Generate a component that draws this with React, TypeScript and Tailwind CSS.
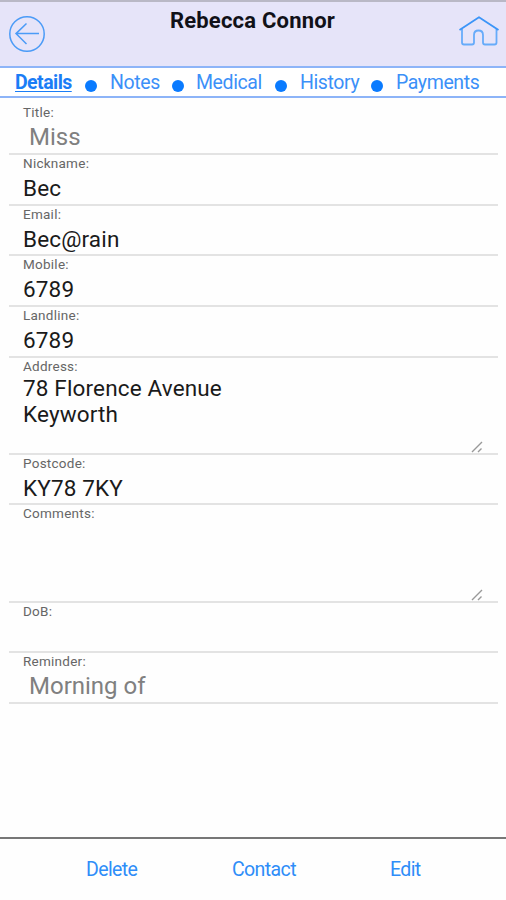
import { Fragment } from "react"
import { clsx } from "clsx"

interface Field {
  label: string
  value: string
  kind?: "select" | "textarea"
  height: string
}

const FIELDS: Field[] = [
  { label: "Title", value: "Miss", kind: "select", height: "h-[51px]" },
  { label: "Nickname", value: "Bec", height: "h-[51px]" },
  { label: "Email", value: "Bec@rain", height: "h-[50px]" },
  { label: "Mobile", value: "6789", height: "h-[51px]" },
  { label: "Landline", value: "6789", height: "h-[51px]" },
  { label: "Address", value: "78 Florence Avenue\nKeyworth", kind: "textarea", height: "h-[97px]" },
  { label: "Postcode", value: "KY78 7KY", height: "h-[50px]" },
  { label: "Comments", value: "", kind: "textarea", height: "h-[98px]" },
  { label: "DoB", value: "", height: "h-[50px]" },
  { label: "Reminder", value: "Morning of", kind: "select", height: "h-[51px]" },
]

const TABS = [
  { name: "Details", width: "w-[56px]", gap: "ml-[14px] mr-[13px]" },
  { name: "Notes", width: "w-[49px]", gap: "ml-[13px] mr-[12px]" },
  { name: "Medical", width: "w-[65px]", gap: "ml-[14px] mr-[13px]" },
  { name: "History", width: "w-[59px]", gap: "ml-[12px] mr-[13px]" },
  { name: "Payments", width: "w-[83px]", gap: "" },
]

function BackIcon() {
  return (
    <svg width="38" height="38" viewBox="0 0 38 38" fill="none" stroke="#4b9bf7" strokeWidth="1.5">
      <circle cx="19" cy="19" r="17.2" />
      <path d="M31 18.6H8M18.5 8.5L8 18.6l10.5 10.4" />
    </svg>
  )
}

function HomeIcon() {
  return (
    <svg width="40" height="32" viewBox="0 0 40 32" fill="none" stroke="#66abfa" strokeWidth="1.8" strokeLinejoin="round">
      <path d="M3 14v13.500q0 2 2 2h8q2 0 2-2V20q0-4.500 4.500-4.500T24 20v7.500q0 2 2 2h9.500q2 0 2-2V14" />
      <path d="M.5 15L20 2.200 39.500 15" stroke="#3c95f8" />
    </svg>
  )
}

function ResizeHandle() {
  return (
    <svg className="absolute right-[15px] bottom-0" width="12" height="12" viewBox="0 0 12 12" stroke="#999" strokeWidth="1.4">
      <path d="M1 11L11 1M7 11l3.500-3.500" />
    </svg>
  )
}

function FieldRow({ label, value, kind, height }: Field) {
  return (
    <div className={clsx("relative border-b-2 border-[#e3e3e3] pl-[14px]", height)}>
      <div className="pt-px text-[13.5px] leading-[15px] tracking-[0.25px] text-[#666]">{label}:</div>
      <div
        className={clsx(
          "whitespace-pre-line leading-[26px]",
          kind === "textarea" ? "pt-px" : "pt-[4px]",
          kind === "select"
            ? "pl-[6px] text-[24px] text-[#808080]"
            : "text-[22.5px] tracking-[0.15px] text-[#1a1a1a]",
        )}
      >
        {value}
      </div>
      {kind === "textarea" && <ResizeHandle />}
    </div>
  )
}

export default function App() {
  return (
    <div className="flex h-[900px] w-[506px] flex-col overflow-hidden bg-[#fefefe] font-['Roboto',sans-serif]">
      <header className="flex h-[68px] items-start justify-between border-t-2 border-b-2 border-t-[#b9b8c6] border-b-[#8db4f8] bg-[#e6e4f9] pr-[7px] pl-[8px]">
        <button className="mt-[13px] w-[38px]" aria-label="Back">
          <BackIcon />
        </button>
        <h1 className="mt-[5px] text-[22px] leading-[28px] font-bold tracking-[0.2px] whitespace-nowrap text-[#111118]">
          Rebecca Connor
        </h1>
        <button className="mt-[13px]" aria-label="Home">
          <HomeIcon />
        </button>
      </header>

      <nav className="flex h-[30px] items-center border-b-2 border-[#8db4f8] bg-white pl-[15px] text-[19.5px] leading-[28px] text-[#3b90f8]">
        {TABS.map((tab, i) => (
          <Fragment key={tab.name}>
            <span
              className={clsx(
                "mt-[2px] shrink-0 whitespace-nowrap",
                tab.width,
                i === 0
                  ? "font-bold tracking-[-0.55px] text-[#1a7df6] underline decoration-1 underline-offset-2"
                  : "tracking-[-0.4px]",
              )}
            >
              {tab.name}
            </span>
            {tab.gap && <i className={clsx("mt-[7px] size-[12px] shrink-0 rounded-full bg-[#0a7bff]", tab.gap)} />}
          </Fragment>
        ))}
      </nav>

      <main className="flex-1 pt-[6px] pr-[8px] pl-[9px]">
        {FIELDS.map((field) => (
          <FieldRow key={field.label} {...field} />
        ))}
      </main>

      <footer className="flex h-[63px] border-t-2 border-[#777] pl-[86px] text-[19.5px] leading-[60px] tracking-[-0.6px] text-[#2e8df8]">
        <button className="w-[146px] text-left">Delete</button>
        <button className="w-[158px] text-left">Contact</button>
        <button className="text-left">Edit</button>
      </footer>
    </div>
  )
}
